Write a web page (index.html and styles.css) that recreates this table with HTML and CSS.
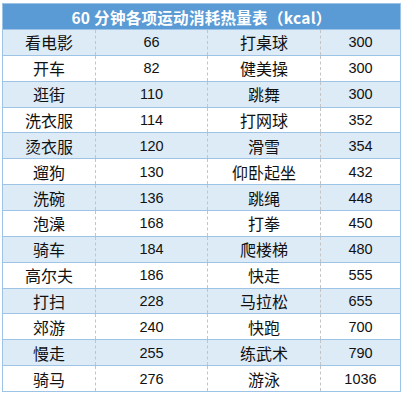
FILE: index.html
```html
<!DOCTYPE html>
<html lang="zh">
<head>
<meta charset="utf-8">
<link rel="stylesheet" href="styles.css">
</head>
<body>
<table class="kcal">
<colgroup><col class="c1"><col class="c2"><col class="c3"><col class="c4"></colgroup>
<thead>
<tr class="head"><th colspan="4">60 分钟各项运动消耗热量表（kcal）</th></tr>
</thead>
<tbody>
<tr class="alt"><td class="name">看电影</td><td class="num">66</td><td class="name">打桌球</td><td class="num">300</td></tr>
<tr><td class="name">开车</td><td class="num">82</td><td class="name">健美操</td><td class="num">300</td></tr>
<tr class="alt"><td class="name">逛街</td><td class="num">110</td><td class="name">跳舞</td><td class="num">300</td></tr>
<tr><td class="name">洗衣服</td><td class="num">114</td><td class="name">打网球</td><td class="num">352</td></tr>
<tr class="alt"><td class="name">烫衣服</td><td class="num">120</td><td class="name">滑雪</td><td class="num">354</td></tr>
<tr><td class="name">遛狗</td><td class="num">130</td><td class="name">仰卧起坐</td><td class="num">432</td></tr>
<tr class="alt"><td class="name">洗碗</td><td class="num">136</td><td class="name">跳绳</td><td class="num">448</td></tr>
<tr><td class="name">泡澡</td><td class="num">168</td><td class="name">打拳</td><td class="num">450</td></tr>
<tr class="alt"><td class="name">骑车</td><td class="num">184</td><td class="name">爬楼梯</td><td class="num">480</td></tr>
<tr><td class="name">高尔夫</td><td class="num">186</td><td class="name">快走</td><td class="num">555</td></tr>
<tr class="alt"><td class="name">打扫</td><td class="num">228</td><td class="name">马拉松</td><td class="num">655</td></tr>
<tr><td class="name">郊游</td><td class="num">240</td><td class="name">快跑</td><td class="num">700</td></tr>
<tr class="alt"><td class="name">慢走</td><td class="num">255</td><td class="name">练武术</td><td class="num">790</td></tr>
<tr><td class="name">骑马</td><td class="num">276</td><td class="name">游泳</td><td class="num">1036</td></tr>
</tbody>
</table>
</body>
</html>
```
FILE: styles.css
```css
html, body {
  margin: 0;
  padding: 0;
  background: #ffffff;
}
body {
  padding: 3px 0 0 2px;
  font-family: "Noto Sans CJK SC", "Noto Sans", sans-serif;
  color: #111;
}
.kcal {
  border-collapse: collapse;
  table-layout: fixed;
  width: 398px;
  border: 1px solid #9dc3e6;
}
.c1 { width: 93px; }
.c2 { width: 112px; }
.c3 { width: 113px; }
.c4 { width: 80px; }
.kcal tr { height: 25.86px; }
.kcal tr.head { height: 26px; }
.kcal th {
  background: #5b9bd5;
  color: #ffffff;
  font-weight: bold;
  font-size: 15.5px;
  padding: 0;
  line-height: 18px;
  text-align: center;
  letter-spacing: 0.3px;
  border: 1px solid #9dc3e6;
}
.kcal td {
  padding: 0;
  text-align: center;
  vertical-align: middle;
  border-top: 1px solid #9dc3e6;
  border-bottom: 1px solid #9dc3e6;
  border-left: 1px dashed #c4c4c4;
  border-right: 1px dashed #c4c4c4;
  line-height: 18px;
}
.kcal td:first-child { border-left: 1px solid #9dc3e6; }
.kcal td:last-child { border-right: 1px solid #9dc3e6; }
.kcal tr.alt td { background: #ddebf7; }
.name { font-size: 16px; }
.num {
  font-family: "Liberation Sans", "DejaVu Sans", sans-serif;
  font-size: 14.5px;
}
```
